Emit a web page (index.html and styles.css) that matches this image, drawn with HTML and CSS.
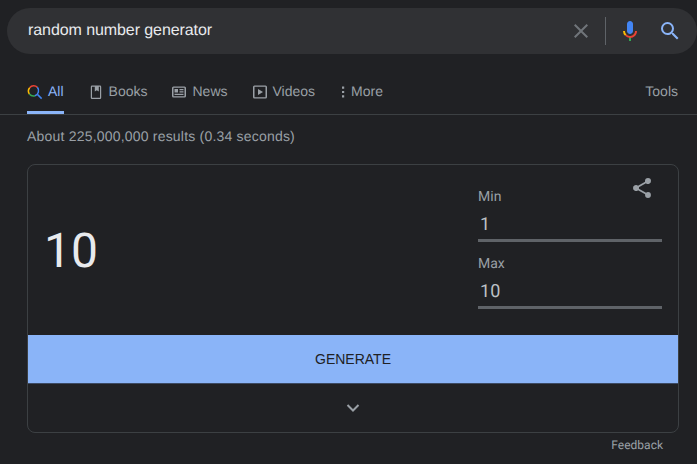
FILE: index.html
```html
<!DOCTYPE html>
<html lang="en">
<head>
<meta charset="utf-8">
<title>random number generator</title>
<link rel="stylesheet" href="styles.css">
</head>
<body>
<header class="searchbar">
  <span class="query">random number generator</span>
  <span class="search-actions">
    <svg class="clear" width="24" height="24" viewBox="0 0 24 24"><path fill="#70757a" d="M19 6.41 17.59 5 12 10.59 6.41 5 5 6.41 10.59 12 5 17.59 6.41 19 12 13.41 17.59 19 19 17.59 13.41 12z"/></svg>
    <span class="divider"></span>
    <svg class="mic" width="24" height="24" viewBox="0 0 24 24">
      <path fill="#4285f4" d="M12 15c1.66 0 3-1.31 3-2.97V5c0-1.66-1.34-3-3-3S9 3.34 9 5v7.03C9 13.69 10.34 15 12 15z"/>
      <path fill="#34a853" d="M11 18.1h2V22h-2z"/>
      <path fill="#fbbc04" d="M7.05 16.87A6.96 6.96 0 0 1 5 12h2c0 1.4.57 2.65 1.5 3.5z"/>
      <path fill="#ea4335" d="M12 17c-1.4 0-2.65-.57-3.5-1.5l-1.45 1.37A6.96 6.96 0 0 0 12 19c3.87 0 7-3.13 7-7h-2c0 2.76-2.24 5-5 5z"/>
    </svg>
    <svg class="lens" width="24" height="24" viewBox="0 0 24 24"><path fill="#8ab4f8" d="M15.5 14h-.79l-.28-.27A6.47 6.47 0 0 0 16 9.5 6.5 6.5 0 1 0 9.5 16c1.61 0 3.09-.59 4.23-1.57l.27.28v.79l5 4.99L20.49 19l-4.99-5zm-6 0C7.01 14 5 11.99 5 9.5S7.01 5 9.500 5 14 7.010 14 9.500 11.990 14 9.500 14z"/></svg>
  </span>
</header>

<nav class="tabs">
  <a class="tab tab-active">
    <svg width="16" height="16" viewBox="0 0 24 24" fill="none" stroke-width="2.3">
      <path stroke="#4285f4" d="M16 16l6 6"/>
      <path stroke="#ea4335" d="M4 5.500A8 8 0 0 1 15.600 5"/>
      <path stroke="#fbbc04" d="M4 5.500A8 8 0 0 0 3.600 15"/>
      <path stroke="#34a853" d="M3.600 15A8 8 0 0 0 12 17.600"/>
      <path stroke="#4285f4" d="M12 17.600A8 8 0 0 0 15.600 5"/>
    </svg>
    <span class="tab-label">All</span>
  </a>
  <a class="tab">
    <svg width="16" height="16" viewBox="0 0 16 16"><path fill="#9aa0a6" fill-rule="evenodd" d="M4 1.500h8A1.200 1.200 0 0 1 13.200 2.700v11.100A1.200 1.200 0 0 1 12 15H4a1.200 1.200 0 0 1-1.200-1.200V2.700A1.200 1.200 0 0 1 4 1.500zM4 2.700v11.100h8V2.700h-1.200v4.800L8.800 6.300 6.800 7.500V2.700z"/></svg>
    <span class="tab-label">Books</span>
  </a>
  <a class="tab">
    <svg width="16" height="16" viewBox="0 0 16 16"><path fill="#9aa0a6" fill-rule="evenodd" d="M2.500 2.500h11A1.500 1.500 0 0 1 15 4v8a1.500 1.500 0 0 1-1.500 1.500h-11A1.500 1.500 0 0 1 1 12V4a1.500 1.500 0 0 1 1.500-1.500zm0 1.200v8.600h11V3.700zM3.500 5H7v3.500H3.500zM8.500 5h4v1.200h-4zM8.500 7.300h4v1.200h-4zM3.500 9.800h9V11h-9z"/></svg>
    <span class="tab-label">News</span>
  </a>
  <a class="tab tab-videos">
    <svg width="16" height="16" viewBox="0 0 16 16"><path fill="#9aa0a6" fill-rule="evenodd" d="M2.500 1.500h11A1.500 1.500 0 0 1 15 3v10a1.500 1.500 0 0 1-1.500 1.500h-11A1.500 1.500 0 0 1 1 13V3a1.500 1.500 0 0 1 1.500-1.500zm0 1.300v10.400h11V2.800zM6 5l5 3-5 3z"/></svg>
    <span class="tab-label">Videos</span>
  </a>
  <a class="tab tab-more">
    <svg width="16" height="16" viewBox="0 0 16 16"><path fill="#9aa0a6" d="M7 2.500h2.200v2.200H7zM7 6.900h2.200v2.200H7zM7 11.300h2.200v2.200H7z"/></svg>
    <span class="tab-label">More</span>
  </a>
  <a class="tab tab-tools"><span class="tab-label">Tools</span></a>
</nav>

<p class="stats">About 225,000,000 results (0.34 seconds)</p>

<section class="card">
  <div class="card-main">
    <div class="result">10</div>
    <div class="limits">
      <svg class="share" width="24" height="24" viewBox="0 0 24 24"><path fill="#9aa0a6" d="M18 16.080c-.76 0-1.440.3-1.960.77L8.910 12.700c.05-.23.090-.46.090-.7s-.04-.47-.09-.7l7.050-4.110A2.990 2.990 0 0 0 21 5a3 3 0 0 0-6 0c0 .24.04.47.09.7L8.040 9.810A2.990 2.990 0 0 0 3 12a2.990 2.990 0 0 0 5.040 2.190l7.120 4.160c-.05.21-.08.43-.08.650a2.920 2.920 0 1 0 2.920-2.920z"/></svg>
      <label class="limit-label">Min</label>
      <div class="limit-value">1</div>
      <label class="limit-label limit-label-max">Max</label>
      <div class="limit-value">10</div>
    </div>
  </div>
  <button class="generate">GENERATE</button>
  <div class="expand">
    <svg width="16" height="16" viewBox="0 0 16 16"><path fill="none" stroke="#9aa0a6" stroke-width="2" d="M2.500 5l5.500 5.500L13.500 5"/></svg>
  </div>
</section>
<footer class="feedback">Feedback</footer>
</body>
</html>
```
FILE: styles.css
```css
* { box-sizing: border-box; }
html, body { margin: 0; height: 100%; }
body {
  background: #202124;
  color: #e8eaed;
  font-family: "Liberation Sans", Arial, sans-serif;
  text-rendering: geometricPrecision;
  overflow: hidden;
  padding-top: 8px;
}
.searchbar {
  margin-left: 7px;
  width: 690px;
  height: 46px;
  border-radius: 23px;
  background: #303134;
  display: flex;
  align-items: center;
  padding-left: 21px;
  padding-right: 15px;
}
.query {
  font-size: 16px;
  letter-spacing: -.08px;
  color: #e8eaed;
  flex: 1;
}
.search-actions { display: flex; align-items: center; }
.clear { margin-right: 12px; }
.divider { width: 1px; height: 28px; background: #5f6368; margin-right: 12px; }
.mic { margin-right: 16px; }
.tabs {
  margin-top: 15px;
  height: 46px;
  border-bottom: 1px solid #3c4043;
  display: flex;
  padding: 0 19px 0 27px;
  font-size: 14px;
}
.tab {
  display: flex;
  align-items: center;
  gap: 5px;
  color: #9aa0a6;
  height: 45px;
  margin-right: 24px;
}
.tab-label { margin-bottom: 2px; }
.tab-active {
  color: #8ab4f8;
  border-bottom: 3px solid #8ab4f8;
  padding-top: 3px;
}
.tab-videos { margin-right: 20px; }
.tab-more { gap: 0; }
.tab-tools { margin: 0 0 0 auto; }
.stats {
  margin: 12px 0 0 27px;
  font-size: 14px;
  line-height: 18px;
  letter-spacing: .2px;
  color: #9aa0a6;
}
.card {
  margin: 19px 0 0 27px;
  width: 652px;
  height: 269px;
  border: 1px solid #3c4043;
  border-radius: 8px;
  overflow: hidden;
}
.card-main {
  height: 170px;
  display: flex;
  justify-content: space-between;
  padding-right: 16px;
}
.result {
  font-family: Roboto, sans-serif;
  font-size: 48px;
  line-height: 56px;
  padding: 58px 0 0 16px;
  color: #e8eaed;
}
.limits {
  position: relative;
  width: 184px;
  padding-top: 24px;
  font-family: Roboto, sans-serif;
}
.share { position: absolute; right: 8px; top: 11px; }
.limit-label {
  display: block;
  font-size: 14px;
  line-height: 16px;
  color: #9aa0a6;
}
.limit-label-max { margin-top: 14px; }
.limit-value {
  height: 33px;
  margin-top: 4px;
  padding: 4px 0 0 2px;
  border-bottom: 3px solid #5f6368;
  font-size: 18px;
  line-height: 24px;
  letter-spacing: .2px;
  color: #bdc1c6;
}
.generate {
  display: block;
  width: 100%;
  height: 49px;
  border: 0;
  border-bottom: 1px solid #3c4a63;
  background: #8ab4f8;
  color: #202124;
  font-family: "Liberation Sans", Arial, sans-serif;
  font-size: 14px;
  line-height: 47px;
  padding: 0;
}
.expand {
  height: 48px;
  display: flex;
  align-items: center;
  justify-content: center;
}
.feedback {
  margin-top: 4px;
  width: 663px;
  text-align: right;
  font-family: Roboto, sans-serif;
  font-size: 12px;
  line-height: 16px;
  color: #9aa0a6;
}
```
